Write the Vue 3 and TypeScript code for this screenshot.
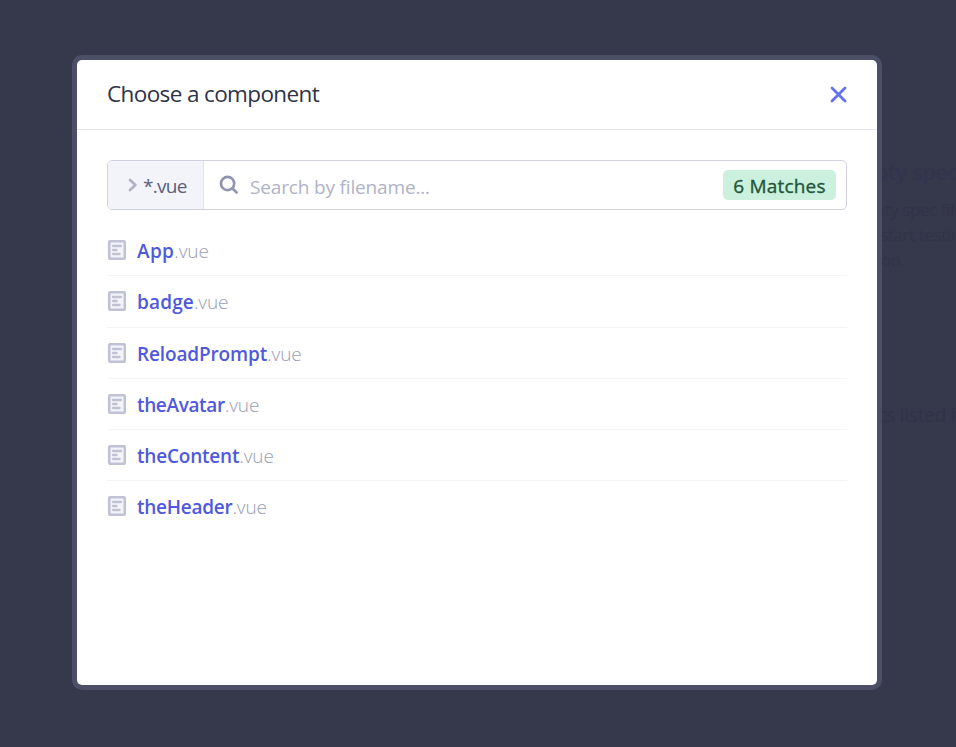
<script setup lang="ts">
interface ComponentFile {
  name: string
  ext: string
  // letter-spacing of the bold name, in px
  tracking: number
}

const files: ComponentFile[] = [
  { name: 'App', ext: '.vue', tracking: 0.35 },
  { name: 'badge', ext: '.vue', tracking: 0.15 },
  { name: 'ReloadPrompt', ext: '.vue', tracking: -0.14 },
  { name: 'theAvatar', ext: '.vue', tracking: -0.36 },
  { name: 'theContent', ext: '.vue', tracking: -0.2 },
  { name: 'theHeader', ext: '.vue', tracking: -0.26 },
]
</script>

<template>
  <div class="screen">
    <div class="page">
      <h2>Empty spec</h2>
      <p>Empty spec file</p>
      <p class="l2">start testing</p>
      <p class="l3">ion.</p>
      <p class="l4">specs listed here</p>
    </div>
    <div class="dialog" role="dialog">
      <header class="head">
        <h1>Choose a component</h1>
        <button class="close" aria-label="Close">
          <svg width="17" height="17" viewBox="0 0 17 17"><path d="M2 2 15 15M15 2 2 15" /></svg>
        </button>
      </header>
      <div class="body">
        <div class="search">
          <div class="pattern">
            <svg width="10" height="14" viewBox="0 0 10 14"><path d="M2 2 7.4 7 2 12" /></svg>
            <span>*.vue</span>
          </div>
          <svg class="glass" width="20" height="20" viewBox="0 0 20 20"><path d="M13.6 13.6 17.6 17.4" /><circle cx="8.6" cy="8.5" r="6.6" /></svg>
          <span class="placeholder">Search by filename...</span>
          <span class="matches">6 Matches</span>
        </div>
        <ul class="list">
          <li v-for="file in files" :key="file.name">
            <svg width="20" height="20" viewBox="0 0 20 20">
              <rect x="2.2" y="1.2" width="15.6" height="17.6" rx="1" />
              <path d="M6 6H14M6 10H9.6M6 14H12.6" />
            </svg>
            <span class="name" :style="{ letterSpacing: file.tracking + 'px' }">{{ file.name }}</span><span class="ext">{{ file.ext }}</span>
          </li>
        </ul>
      </div>
    </div>
  </div>
</template>

<style>
body {
  margin: 0;
}
</style>

<style scoped>
.screen {
  position: relative;
  width: 956px;
  height: 747px;
  overflow: hidden;
  background: #36384b;
  font-family: "Open Sans", "Noto Sans", sans-serif;
  display: flex;
  justify-content: center;
  align-items: flex-start;
}
.page {
  position: absolute;
  left: 843px;
  top: 157px;
  width: 300px;
  color: #313448;
  white-space: nowrap;
}
.page h2 {
  margin: 0 0 10px;
  font-size: 21.5px;
  line-height: 30px;
  font-weight: 600;
  letter-spacing: -0.4px;
  color: #33344e;
}
.page p {
  margin: 0 0 0 7px;
  font-size: 17px;
  line-height: 25px;
  letter-spacing: -0.4px;
}
.page .l2 {
  margin-left: 37px;
}
.page .l3 {
  margin-left: 34px;
}
.page .l4 {
  margin: 129px 0 0 3px;
  font-size: 19.5px;
  line-height: 28px;
  letter-spacing: -0.4px;
}
.dialog {
  position: relative;
  box-sizing: border-box;
  width: 810px;
  height: 635px;
  margin: 55px 2px 0 0;
  border: 5px solid #4c4f65;
  border-radius: 10px;
  background: #4c4f65;
  display: flex;
  flex-direction: column;
}
.head {
  height: 69px;
  padding: 0 30px;
  border-bottom: 1px solid #e1e3ed;
  border-radius: 5px 5px 0 0;
  background: #fff;
  display: flex;
  align-items: center;
  justify-content: space-between;
}
.head h1 {
  margin: 0 0 2px;
  font-size: 22.5px;
  font-weight: 400;
  line-height: 30px;
  letter-spacing: -0.62px;
  color: #2e3247;
}
.close {
  display: flex;
  padding: 0;
  border: 0;
  background: none;
}
.close path {
  fill: none;
  stroke: #6470f3;
  stroke-width: 2.8;
  stroke-linecap: round;
}
.body {
  flex: 1;
  padding: 30px 30px 0;
  background: #fff;
  border-radius: 0 0 5px 5px;
}
.search {
  box-sizing: border-box;
  height: 50px;
  border: 1px solid #d0d2e0;
  border-radius: 5px;
  display: flex;
  align-items: center;
  overflow: hidden;
}
.pattern {
  box-sizing: border-box;
  width: 96px;
  height: 100%;
  padding-left: 20px;
  border-right: 1px solid #e1e3ed;
  background: #f3f4fa;
  display: flex;
  align-items: center;
  gap: 5px;
  font-size: 19px;
  letter-spacing: -0.7px;
  color: #5a5f7a;
}
.pattern span {
  padding-top: 2px;
}
.pattern path {
  fill: none;
  stroke: #afb3c7;
  stroke-width: 2.8;
  stroke-linecap: round;
  stroke-linejoin: round;
}
.glass {
  margin-left: 15px;
}
.glass path,
.glass circle {
  fill: none;
  stroke: #9095ad;
  stroke-width: 2.7;
  stroke-linecap: round;
}
.placeholder {
  flex: 1;
  margin: 4px 0 0 11px;
  font-size: 19px;
  letter-spacing: -0.16px;
  color: #afb3c7;
}
.matches {
  box-sizing: border-box;
  width: 113px;
  height: 30px;
  margin-right: 10px;
  border-radius: 5px;
  background: #cbf0dd;
  color: #22553a;
  font-size: 19px;
  font-weight: 500;
  letter-spacing: 0.2px;
  line-height: 32px;
  text-align: center;
  white-space: nowrap;
  -webkit-text-stroke: 0.35px #22553a;
}
.list {
  margin: 15.1px 0 0;
  padding: 0;
  list-style: none;
}
.list li {
  box-sizing: border-box;
  height: 51.25px;
  border-bottom: 1px solid #f3f4fa;
  display: flex;
  align-items: center;
  font-size: 19px;
  line-height: 27px;
}
.list li:last-child {
  border-bottom-color: transparent;
}
.list svg {
  margin: 0 10px 0.2px 0;
}
.list rect {
  fill: #f3f4fa;
  stroke: #bfc2d4;
  stroke-width: 2.5;
}
.list path {
  fill: none;
  stroke: #bfc2d4;
  stroke-width: 2.3;
  stroke-linecap: round;
}
.name,
.ext {
  padding-top: 2.6px;
}
.name {
  font-weight: 600;
  color: #4f59de;
}
.ext {
  font-weight: 300;
  letter-spacing: -0.1px;
  color: #9a9eb4;
}
</style>
